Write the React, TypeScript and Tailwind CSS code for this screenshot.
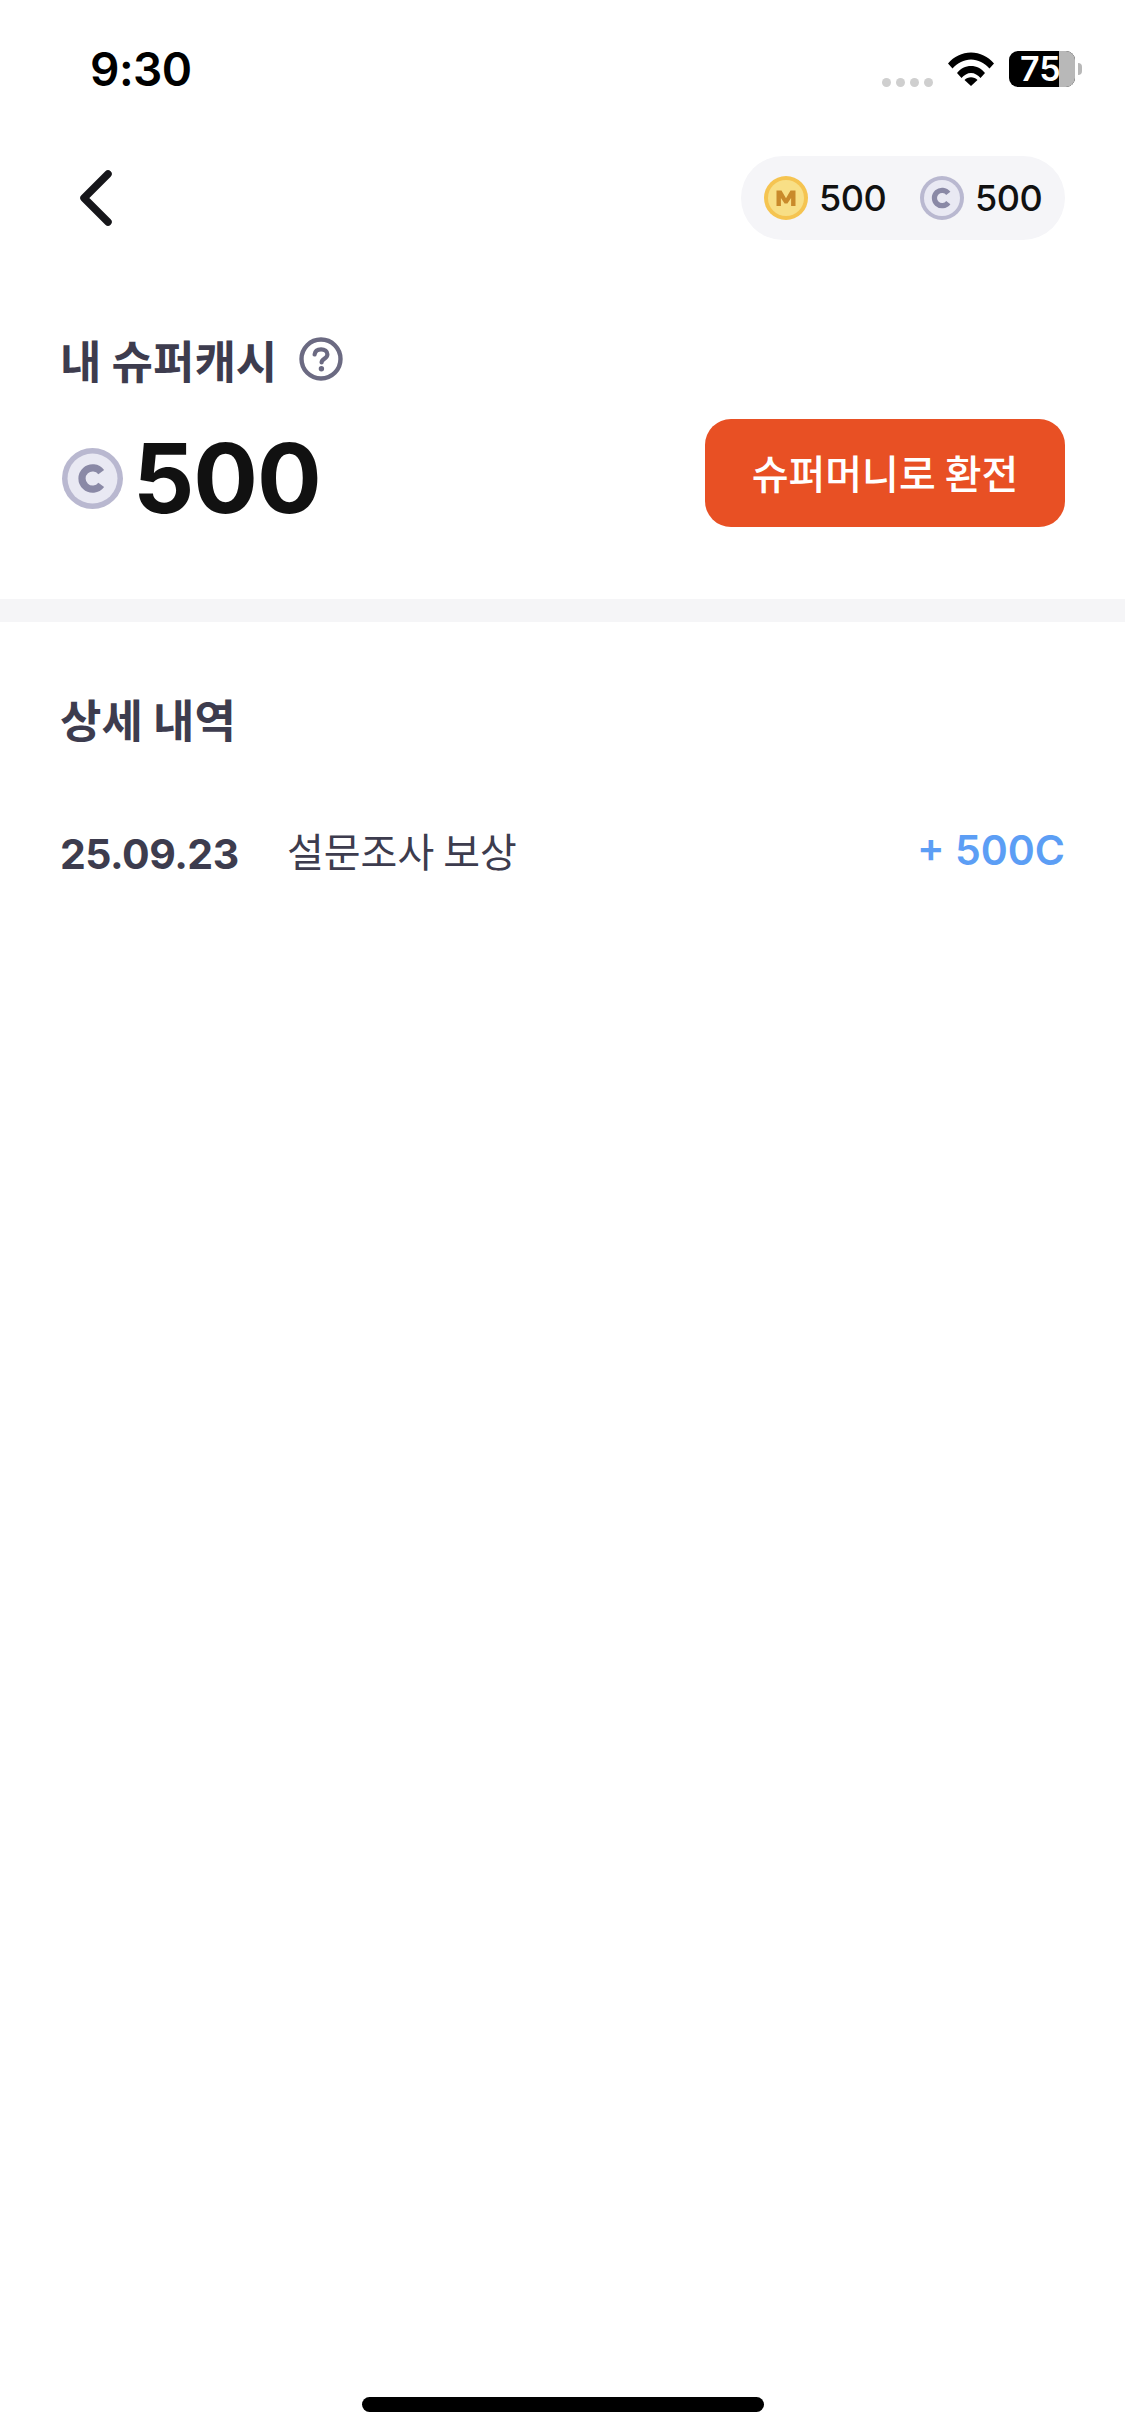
import React from "react";

const latin = "font-['Inter','Noto_Sans_CJK_KR',sans-serif]";
const korean = "font-['Noto_Sans_CJK_KR','Inter',sans-serif]";

// gold M coin / silver C coin, shared drawing
function Coin({ kind, size }: { kind: "m" | "c"; size: number }) {
  const gold = kind === "m";
  return (
    <svg width={size} height={size} viewBox="0 0 44 44" className="shrink-0">
      <circle cx="22" cy="22" r="22" fill={gold ? "#f5c451" : "#b9b8d0"} />
      <circle cx="22" cy="22" r="18" fill={gold ? "#f8df86" : "#e9e9f3"} />
      {gold ? (
        <path d="M12.500 30V14.500h5l4.500 7.800 4.500-7.800h5V30h-4.400v-8l-3.700 5.600h-2.800L16.900 22v8z" fill="#c98a2b" />
      ) : (
        <path d="M28.300 26.600a7.700 7.700 0 1 1 0-9.200" fill="none" stroke="#8a89a6" strokeWidth="5.200" />
      )}
    </svg>
  );
}

function StatusBar() {
  return (
    <div className="flex h-[138px] shrink-0 items-center justify-between pl-[90px] pr-[43px]">
      <span className={`${latin} text-[46px] leading-none font-semibold tracking-[-0.5px] text-black`}>9:30</span>
      <div className="flex items-center">
        <div className="mt-[26px] flex gap-[5px]">
          <span className="h-[9px] w-[9px] rounded-full bg-[#cfcfcf]" />
          <span className="h-[9px] w-[9px] rounded-full bg-[#cfcfcf]" />
          <span className="h-[9px] w-[9px] rounded-full bg-[#cfcfcf]" />
          <span className="h-[9px] w-[9px] rounded-full bg-[#cfcfcf]" />
        </div>
        <svg width="46" height="34" viewBox="0 0 46 34" className="ml-[15px]">
          <path d="M0 11.500C6 4.500 14 .5 23 .5s17 4 23 11l-4.500 5C36.500 11 30 7.500 23 7.500S9.500 11 4.500 16.500z" fill="#000" />
          <path d="M9 21C12.500 16.500 17.500 14 23 14s10.500 2.500 14 7l-4.500 5C30 23 26.500 21 23 21s-7 2-9.500 5z" fill="#000" />
          <path d="M16.500 28c1.700-1.700 4-2.700 6.500-2.700s4.800 1 6.500 2.700L23 34z" fill="#000" />
        </svg>
        <div className={`${latin} relative ml-[15px] h-[36px] w-[66px] rounded-[9px] bg-black`}>
          <span className="absolute inset-y-0 right-0 w-[16px] rounded-r-[9px] bg-[#b8b8b8]" />
          <span className="relative block pl-[11px] text-[34px] leading-[36px] font-semibold text-white">75</span>
        </div>
        <span className="ml-[3px] h-[12px] w-[4px] rounded-r-full bg-[#b8b8b8]" />
      </div>
    </div>
  );
}

function HelpIcon() {
  return (
    <svg width="44" height="44" viewBox="0 0 44 44" className="shrink-0">
      <circle cx="22" cy="22" r="19.500" fill="none" stroke="#6b6a82" strokeWidth="4.400" />
      <path d="M15.600 17.500c.4-3.300 3-5.200 6.500-5.200 3.600 0 6.300 2 6.300 5 0 2.400-1.400 3.500-3.200 4.600-1.600 1-2.600 1.800-2.600 3.600" fill="none" stroke="#6b6a82" strokeWidth="4.200" strokeLinecap="round" />
      <circle cx="22.400" cy="31.800" r="2.700" fill="#6b6a82" />
    </svg>
  );
}

export default function App() {
  return (
    <main className="flex min-h-[2436px] w-[1125px] flex-col bg-white">
      <StatusBar />

      {/* header */}
      <div className="mt-[18px] flex h-[84px] shrink-0 items-center justify-between pl-[75px] pr-[60px]">
        <svg width="40" height="60" viewBox="0 0 40 60">
          <path d="M33 6 9 30l24 24" fill="none" stroke="#16161a" strokeWidth="7.500" strokeLinecap="round" strokeLinejoin="round" />
        </svg>
        <div className={`${latin} flex h-[84px] w-[324px] items-center rounded-[42px] bg-[#f5f5f8] pl-[23px] text-[36px] leading-none font-medium tracking-[-0.5px] text-[#111]`}>
          <Coin kind="m" size={44} />
          <span className="ml-[11px] w-[101px]">500</span>
          <Coin kind="c" size={44} />
          <span className="ml-[11px]">500</span>
        </div>
      </div>

      {/* balance */}
      <section className="mt-[90px] flex h-[269px] shrink-0 flex-col pl-[60px] pr-[60px]">
        <div className="flex h-[58px] items-center">
          <span className={`${korean} text-[45px] leading-none font-semibold text-[#3d3c4e]`}>내 슈퍼캐시</span>
          <span className="ml-[22px]"><HelpIcon /></span>
        </div>
        <div className="flex items-start justify-between">
          <div className="mt-[28px] ml-[2px] flex items-center">
            <Coin kind="c" size={61} />
            <span className={`${latin} ml-[10px] text-[96px] leading-[124px] font-bold tracking-[-1px] text-[#111]`}>500</span>
          </div>
          <button className={`${korean} mt-[31px] h-[108px] w-[360px] rounded-[26px] bg-[#e85024] pb-[2px] text-[40px] font-medium text-white`}>
            슈퍼머니로 환전
          </button>
        </div>
      </section>

      <div className="h-[23px] shrink-0 bg-[#f5f5f7]" />

      {/* details */}
      <section className="shrink-0 pl-[60px] pr-[60px] pt-[68px]">
        <h2 className={`${korean} text-[45px] leading-[58px] font-semibold text-[#3d3c4e]`}>상세 내역</h2>
        <div className="mt-[72px] flex h-[60px] items-center justify-between">
          <div className="flex items-center">
            <span className={`${latin} mt-[8px] w-[227px] text-[41px] leading-none font-bold tracking-[-0.5px] text-[#3d3c4e]`}>25.09.23</span>
            <span className={`${korean} text-[40px] leading-none text-[#3d3c4e]`}>설문조사 보상</span>
          </div>
          <span className={`${latin} text-[41px] leading-none font-semibold text-[#5c9ef5]`}>+ 500C</span>
        </div>
      </section>

      {/* home indicator */}
      <div className="mt-auto flex justify-center pb-[24px]">
        <div className="h-[15px] w-[402px] rounded-full bg-black" />
      </div>
    </main>
  );
}
